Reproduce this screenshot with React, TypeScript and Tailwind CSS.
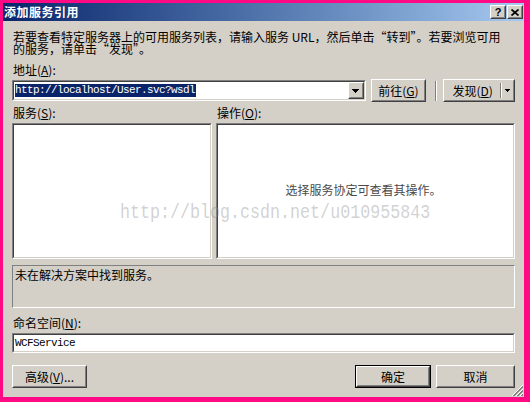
import React from "react";

const cjk = "font-['Noto_Sans_CJK_SC','Noto_Sans_CJK_JP',sans-serif]";
const mono = "font-['Liberation_Mono',monospace]";

function Raised({ className = "", children }: { className?: string; children?: React.ReactNode }) {
  return (
    <div className={`border border-t-white border-l-white border-r-[#404040] border-b-[#404040] bg-[#d4d0c8] ${className}`}>
      <div className="w-full h-full border border-t-[#d4d0c8] border-l-[#d4d0c8] border-r-[#808080] border-b-[#808080] flex items-center justify-center">
        {children}
      </div>
    </div>
  );
}

function Sunken({ className = "", innerClassName = "", children }: { className?: string; innerClassName?: string; children?: React.ReactNode }) {
  return (
    <div className={`border border-t-[#808080] border-l-[#808080] border-r-white border-b-white ${className}`}>
      <div className={`w-full h-full border border-t-[#404040] border-l-[#404040] border-r-[#d4d0c8] border-b-[#d4d0c8] bg-white ${innerClassName}`}>
        {children}
      </div>
    </div>
  );
}

function Arrow({ small = false }: { small?: boolean }) {
  return small ? (
    <svg width="5" height="3" viewBox="0 0 5 3" shapeRendering="crispEdges">
      <path d="M0 0h5v1H0z M1 1h3v1H1z M2 2h1v1H2z" fill="#000" />
    </svg>
  ) : (
    <svg width="7" height="4" viewBox="0 0 7 4" shapeRendering="crispEdges">
      <path d="M0 0h7v1H0z M1 1h5v1H1z M2 2h3v1H2z M3 3h1v1H3z" fill="#000" />
    </svg>
  );
}

function U({ c }: { c: string }) {
  return <span className="underline underline-offset-[1px]">{c}</span>;
}

export default function App() {
  return (
    <div className={`w-[530px] h-[402px] bg-[#ff0a84] pt-[3px] pl-[3px] pr-[6px] pb-[5px] ${cjk} text-black overflow-hidden`}>
      <div className="relative w-full h-full bg-[#d4d0c8] flex flex-col">
        {/* Title bar */}
        <div className="h-[18px] flex items-center bg-linear-to-r from-[#0a246a] to-[#a6caf0] pl-[1px] pr-[1px]">
          <span className="text-white font-bold text-[12px] leading-[14px] tracking-[0.5px]">添加服务引用</span>
          <div className="ml-auto flex gap-[1px]">
            <Raised className="w-[16px] h-[14px]">
              <span className="font-['Liberation_Sans',sans-serif] font-bold text-[11px] leading-[10px] text-black">?</span>
            </Raised>
            <Raised className="w-[16px] h-[14px]">
              <svg width="8" height="7" viewBox="0 0 8 7">
                <path d="M0.5 0.5 L7.5 6.5 M7.5 0.5 L0.5 6.5" stroke="#000" strokeWidth="1.7" />
              </svg>
            </Raised>
          </div>
        </div>

        {/* Content */}
        <div className="flex flex-col px-[9px] text-[12px]">
          <div className="mt-[10px] pl-[1px] leading-[12px] whitespace-nowrap">
            若要查看特定服务器上的可用服务列表，请输入服务 URL，然后单击“转到”。若要浏览可用
            <br />
            的服务，请单击“发现”。
          </div>

          <div className="mt-[9px] pl-[1px] leading-[12px]">
            地址(<U c="A" />):
          </div>

          <div className="mt-[3px] h-[23px] flex items-center">
            <Sunken className="w-[355px] h-[21px]" innerClassName="flex items-stretch">
              <div className="flex-1 flex items-center pl-[1px]">
                <span className={`${mono} text-[11px] tracking-[-0.6px] leading-[13px] bg-[#0a246a] text-white pr-[1px]`}>
                  http://localhost/User.svc?wsdl
                </span>
              </div>
              <Raised className="w-[16px] h-full">
                <Arrow />
              </Raised>
            </Sunken>
            <Raised className="ml-[5px] w-[56px] h-[23px]">
              <span className="leading-[12px]">
                前往(<U c="G" />)
              </span>
            </Raised>
            <div className="ml-[9px] w-[2px] h-[20px] flex">
              <div className="w-[1px] h-full bg-[#808080]" />
              <div className="w-[1px] h-full bg-white" />
            </div>
            <Raised className="ml-[6px] w-[72px] h-[23px]">
              <div className="flex-1 flex items-center justify-center">
                <span className="leading-[12px]">
                  发现(<U c="D" />)
                </span>
              </div>
              <div className="w-[2px] h-[15px] flex">
                <div className="w-[1px] h-full bg-[#808080]" />
                <div className="w-[1px] h-full bg-white" />
              </div>
              <div className="w-[11px] flex items-center justify-center">
                <Arrow small />
              </div>
            </Raised>
          </div>

          <div className="mt-[5px] flex leading-[12px]">
            <div className="w-[200px] pl-[1px]">
              服务(<U c="S" />):
            </div>
            <div className="ml-[4px] pl-[1px]">
              操作(<U c="O" />):
            </div>
          </div>

          <div className="mt-[4px] flex h-[136px]">
            <Sunken className="w-[200px] h-full" />
            <Sunken className="ml-[4px] flex-1 h-full" innerClassName="flex items-center justify-center">
              <span className="text-[#4a4a4a] leading-[12px] -mt-[2px] -ml-[4px]">选择服务协定可查看其操作。</span>
            </Sunken>
          </div>

          <div className="mt-[6px] h-[43px] border border-t-[#808080] border-l-[#808080] border-r-white border-b-white pl-[2px] pt-[3px] leading-[12px]">
            未在解决方案中找到服务。
          </div>

          <div className="mt-[9px] pl-[1px] leading-[12px]">
            命名空间(<U c="N" />):
          </div>

          <Sunken className="mt-[4px] h-[20px]" innerClassName="flex items-center pl-[1px]">
            <span className={`${mono} text-[11px] tracking-[-0.6px] leading-[13px]`}>WCFService</span>
          </Sunken>

          <div className="mt-[12px] flex items-center">
            <Raised className="w-[75px] h-[23px]">
              <span className="leading-[12px]">
                高级(<U c="V" />)...
              </span>
            </Raised>
            <div className="ml-auto border border-black w-[76px] h-[23px]">
              <Raised className="w-full h-full">
                <span className="leading-[12px]">确定</span>
              </Raised>
            </div>
            <Raised className="ml-[5px] w-[79px] h-[23px]">
              <span className="leading-[12px]">取消</span>
            </Raised>
          </div>
        </div>

        {/* watermark */}
        <div
          className={`absolute left-[117px] top-[199px] ${mono} text-[21px] leading-[21px] text-[rgba(140,140,140,0.4)] scale-x-[0.794] origin-left whitespace-nowrap pointer-events-none`}
        >
          http://blog.csdn.net/u010955843
        </div>

        {/* size grip */}
        <svg className="absolute right-[1px] bottom-[1px]" width="12" height="12" viewBox="0 0 12 12">
          <path d="M1 12 L12 1 M5 12 L12 5 M9 12 L12 9" stroke="#ffffff" strokeWidth="1" />
          <path d="M2 12 L12 2 M3 12 L12 3 M6 12 L12 6 M7 12 L12 7 M10 12 L12 10 M11 12 L12 11" stroke="#808080" strokeWidth="1" />
        </svg>
      </div>
    </div>
  );
}
